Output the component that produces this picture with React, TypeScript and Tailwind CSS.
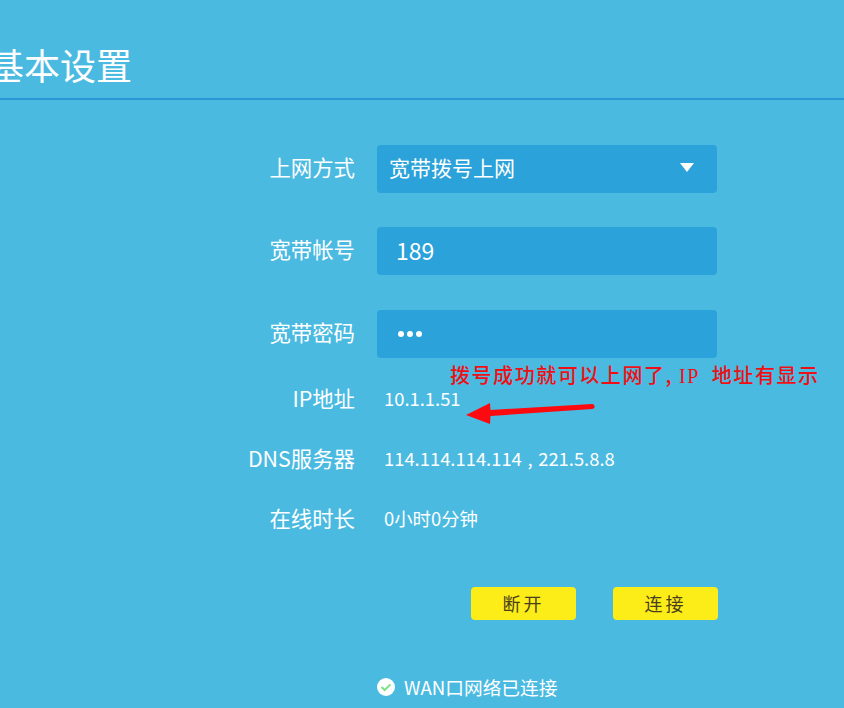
import React from "react";

const font = { fontFamily: '"Noto Sans CJK SC", "Noto Sans", sans-serif' };

function Label({ children }: { children: React.ReactNode }) {
  return <div className="h-[30px] w-[355px] shrink-0 text-right text-[21.4px] leading-[26px] text-white">{children}</div>;
}

function Field({ children, className = "" }: { children: React.ReactNode; className?: string }) {
  return (
    <div className={`ml-[22px] flex h-12 w-[340px] items-center rounded-[4px] bg-[#2ba2d9] text-white ${className}`}>
      {children}
    </div>
  );
}

function InfoRow({ label, value, className = "" }: { label: string; value: string; className?: string }) {
  return (
    <div className={`flex items-center ${className}`}>
      <Label>{label}</Label>
      <div className="ml-[29px] h-[30px] text-[18.4px] leading-[26px] text-white [word-spacing:1.5px]">{value}</div>
    </div>
  );
}

export default function App() {
  return (
    <div className="relative h-[708px] w-[844px] overflow-hidden bg-[#4abae1]" style={font}>
      <div className="h-[100px] border-b-2 border-[#2a96d6] pt-[37px]">
        <div className="ml-[-12px] text-[36px] leading-[54px] text-white">基本设置</div>
      </div>

      <div className="flex items-center pt-[45px]">
        <Label>上网方式</Label>
        <Field className="justify-between pb-[2px] pl-[12px] pr-[23px]">
          <span className="text-[21px]">宽带拨号上网</span>
          <span className="mb-[1px] h-0 w-0 border-x-[7px] border-t-[9px] border-x-transparent border-t-white" />
        </Field>
      </div>
      <div className="mt-[34px] flex items-center">
        <Label>宽带帐号</Label>
        <Field className="pb-[2px] pl-[19px]">
          <span className="text-[23px]">189</span>
        </Field>
      </div>
      <div className="mt-[35px] flex items-center">
        <Label>宽带密码</Label>
        <Field className="gap-[3px] pl-[21px]">
          <span className="h-[6px] w-[6px] rounded-full bg-white" />
          <span className="h-[6px] w-[6px] rounded-full bg-white" />
          <span className="h-[6px] w-[6px] rounded-full bg-white" />
        </Field>
      </div>

      <InfoRow className="mt-[27px]" label="IP地址" value="10.1.1.51" />
      <InfoRow className="mt-[30px]" label="DNS服务器" value="114.114.114.114 , 221.5.8.8" />
      <InfoRow className="mt-[30px]" label="在线时长" value="0小时0分钟" />

      <div className="mt-[52px] flex gap-[37px] pl-[471px]">
        <div className="flex h-[33px] w-[105px] items-center justify-center rounded-[4px] bg-[#fcec18] text-[18px] tracking-[3px] text-[#4a3f1c]">断开</div>
        <div className="flex h-[33px] w-[105px] items-center justify-center rounded-[4px] bg-[#fcec18] text-[18px] tracking-[3px] text-[#4a3f1c]">连接</div>
      </div>

      <div className="mt-[53px] flex items-center pl-[377px]">
        <svg width="18" height="18" viewBox="0 0 18 18" className="shrink-0">
          <circle cx="9" cy="9" r="9" fill="#ffffff" />
          <path d="M4.5 9l3.2 3 5.8-5.6" fill="none" stroke="#7fe08a" strokeWidth="2" />
        </svg>
        <span className="ml-[9px] text-[18.7px] leading-[28px] text-white">WAN口网络已连接</span>
      </div>

      <div className="absolute left-[450px] top-[361px] whitespace-pre text-[20px] font-medium leading-[28px] tracking-[1.55px] text-[#f00f14]">
        拨号成功就可以上网了, <span style={{ fontFamily: '"Liberation Serif", serif' }}>IP </span> 地址有显示
      </div>

      <svg width="140" height="34" viewBox="0 0 140 34" className="absolute left-[462px] top-[398px]">
        <path d="M4 17L28 5L28.5 12L130 6C133.5 6 133.5 11 130 11L28.5 18L28 26Z" fill="#fc0a0f" />
      </svg>
    </div>
  );
}
